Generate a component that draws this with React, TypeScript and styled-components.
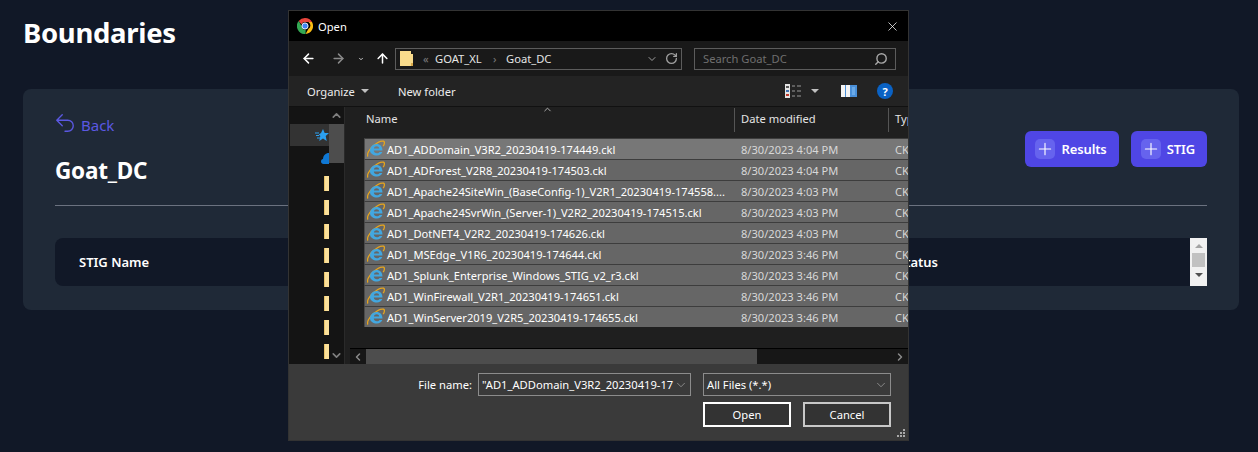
import React from "react";
import styled, { createGlobalStyle } from "styled-components";
import {
  ArrowLeft,
  ArrowRight,
  ArrowUp,
  ChevronDown,
  ChevronLeft,
  ChevronRight,
  ChevronUp,
  RotateCw,
  Search,
  X,
} from "lucide-react";
import { HiOutlineArrowUturnLeft, HiPlus } from "react-icons/hi2";

const GlobalStyle = createGlobalStyle`
  html, body {
    margin: 0;
    padding: 0;
    background: #111827;
    overflow: hidden;
  }
  * { box-sizing: border-box; }
`;

const Page = styled.div`
  position: relative;
  width: 1258px;
  height: 452px;
  padding: 15px 19px 0 23px;
  background: #111827;
  color: #ffffff;
  font-family: "Noto Sans", "Open Sans", sans-serif;
`;
const PageTitle = styled.h1`
  margin: 0 0 33px;
  height: 41px;
  font-size: 27.5px;
  line-height: 35px;
  font-weight: 700;
  letter-spacing: -0.3px;
`;
const Card = styled.section`
  height: 221px;
  padding: 24px 32px 0;
  background: #1f2937;
  border-radius: 8px;
`;
const CardHead = styled.div`
  display: flex;
  justify-content: space-between;
  align-items: flex-start;
  height: 93px;
  border-bottom: 1px solid #6b7280;
`;
const BackLink = styled.a`
  display: flex;
  align-items: center;
  gap: 5px;
  height: 24px;
  margin: 0 0 20px -1px;
  color: #5b58e2;
  font-size: 15px;
  svg { width: 22px; height: 22px; margin-top: -5px; }
`;
const CardTitle = styled.h2`
  margin: 0;
  font-size: 22.5px;
  line-height: 28px;
  font-weight: 700;
  letter-spacing: -0.2px;
`;
const Actions = styled.div`
  display: flex;
  gap: 12px;
  margin-top: 18px;
`;
const AddButton = styled.button`
  display: flex;
  align-items: center;
  gap: 6px;
  height: 36px;
  padding: 0 12px 0 10px;
  border: 0;
  border-radius: 6px;
  background: #4f46e5;
  color: #ffffff;
  font: 600 13px "Noto Sans", sans-serif;
  letter-spacing: -0.12px;
`;
const AddIcon = styled.span`
  display: flex;
  align-items: center;
  justify-content: center;
  width: 20px;
  height: 20px;
  border-radius: 5px;
  background: #6663ee;
  svg { width: 18px; height: 18px; }
`;
const TableHead = styled.div`
  display: flex;
  align-items: center;
  height: 48px;
  margin-top: 32px;
  padding-left: 24px;
  border-radius: 8px 0 0 8px;
  background: #111827;
  font-size: 13px;
  font-weight: 600;
`;
const HeadName = styled.span`
  width: 819px;
`;
const HeadStatus = styled.span`
  flex: 1;
`;
const WebScroll = styled.div`
  display: flex;
  flex-direction: column;
  align-items: center;
  width: 17px;
  height: 48px;
  background: #f1f1f1;
`;
const WebArrow = styled.span<{ $down?: boolean }>`
  width: 0;
  height: 0;
  margin: ${(p) => (p.$down ? "6px 0 0" : "6px 0 5px")};
  border-left: 4px solid transparent;
  border-right: 4px solid transparent;
  ${(p) =>
    p.$down ? "border-top: 4px solid #505050;" : "border-bottom: 4px solid #a3a3a3;"}
`;
const WebThumb = styled.span`
  width: 13px;
  height: 14px;
  background: #c1c1c1;
`;

/* file dialog, floats over the page */
const Dialog = styled.div`
  position: absolute;
  left: 288px;
  top: 10px;
  display: flex;
  flex-direction: column;
  width: 621px;
  height: 431px;
  border: 1px solid #333333;
  background: #1c1c1c;
  color: #ffffff;
  font: 11.2px "Noto Sans", sans-serif;
  overflow: hidden;
`;
const TitleBar = styled.div`
  display: flex;
  align-items: center;
  gap: 5px;
  height: 30px;
  padding: 0 8px;
  background: #000000;
`;
const TitleText = styled.span`
  flex: 1;
`;
const NavBar = styled.div`
  display: flex;
  align-items: center;
  height: 35px;
  padding: 0 12px 0 9px;
  background: #191919;
`;
const NavBtn = styled.span<{ $w: number; $dim?: boolean; $end?: boolean }>`
  display: flex;
  justify-content: ${(p) => (p.$end ? "flex-end" : "center")};
  width: ${(p) => p.$w}px;
  color: ${(p) => (p.$dim ? "#8a8a8a" : "#ffffff")};
`;
const AddressBox = styled.div`
  display: flex;
  align-items: center;
  width: 287px;
  height: 22px;
  margin-left: 5px;
  padding: 0 4px;
  border: 1px solid #5c5c5c;
  svg { flex: none; color: #a0a0a0; }
`;
const Crumb = styled.span<{ $w: number; $dim?: boolean; $pl?: number }>`
  flex: none;
  width: ${(p) => p.$w}px;
  padding-left: ${(p) => p.$pl || 0}px;
  color: ${(p) => (p.$dim ? "#7c7c7c" : "#e6e6e6")};
`;
const Refresh = styled(RotateCw)`
  margin-left: 7px;
`;
const SearchBox = styled.div`
  display: flex;
  align-items: center;
  justify-content: space-between;
  width: 202px;
  height: 22px;
  margin-left: 12px;
  padding: 0 7px 0 8px;
  border: 1px solid #5c5c5c;
  color: #6f6f6f;
  svg { transform: scaleX(-1); color: #a8a8a8; }
`;
const ToolBar = styled.div`
  display: flex;
  align-items: center;
  height: 31px;
  padding: 0 15px 0 18px;
  border-bottom: 1px solid #111111;
  background: #232323;
`;
const Caret = styled.span<{ $ml?: number }>`
  width: 0;
  height: 0;
  margin-left: ${(p) => p.$ml ?? 6}px;
  border-left: 4px solid transparent;
  border-right: 4px solid transparent;
  border-top: 4px solid #c0c0c0;
`;
const ToolLabel = styled.span<{ $w: number }>`
  display: flex;
  align-items: center;
  width: ${(p) => p.$w}px;
  color: #ececec;
`;
const ToolRight = styled.div`
  display: flex;
  align-items: center;
  margin-left: auto;
`;
const PaneWrap = styled.span`
  display: flex;
  margin-left: 22px;
`;
const HelpDot = styled.span`
  display: flex;
  align-items: center;
  justify-content: center;
  width: 16px;
  height: 16px;
  margin-left: 20px;
  border-radius: 50%;
  background: #0a62c4;
  font-size: 11px;
  font-weight: 700;
`;
const Body = styled.div`
  display: flex;
  height: 257px;
`;
const Side = styled.div`
  display: flex;
  width: 56px;
  border-right: 1px solid #2a2a2a;
  background: #141414;
`;
const SideList = styled.div`
  display: flex;
  flex-direction: column;
  width: 40px;
  padding: 17px 0 0 1px;
  overflow: hidden;
`;
const SideItem = styled.div<{ $on?: boolean; $h: number }>`
  display: flex;
  flex: none;
  align-items: center;
  justify-content: flex-end;
  height: ${(p) => p.$h}px;
  background: ${(p) => (p.$on ? "#333333" : "transparent")};
`;
const SideFolder = styled.span`
  width: 5px;
  height: 15px;
  background: #fbe09a;
  border-left: 1px solid #e9c46a;
`;
const SideBar = styled.div`
  display: flex;
  flex-direction: column;
  align-items: center;
  width: 15px;
  padding: 2px 0;
  color: #7f7f7f;
`;
const SideThumb = styled.div`
  flex: none;
  width: 15px;
  height: 39px;
  margin: 2px 0 auto;
  background: #4d4d4d;
`;
const Main = styled.div`
  position: relative;
  display: flex;
  flex: 1;
  flex-direction: column;
  min-width: 0;
  background: #1f1f1f;
`;
const SortMark = styled.span`
  position: absolute;
  left: 197px;
  top: -3px;
  color: #bbbbbb;
  svg { display: block; }
`;
const Columns = styled.div`
  display: flex;
  flex: none;
  height: 31px;
  padding-top: 1px;
  color: #e4e4e4;
`;
const ColHead = styled.span<{ $w: number; $pl?: number }>`
  flex: none;
  width: ${(p) => p.$w}px;
  height: 24px;
  padding: 3px 0 0 ${(p) => p.$pl ?? 6}px;
  border-right: 1px solid #555555;
`;
const ColLast = styled.span`
  padding: 3px 0 0 6px;
  white-space: nowrap;
`;
const Rows = styled.div`
  display: flex;
  flex: 1;
  flex-direction: column;
  padding-left: 19px;
  overflow: hidden;
`;
const Row = styled.div<{ $on?: boolean }>`
  display: flex;
  flex: none;
  align-items: center;
  height: 21px;
  border-top: 1px solid #3d3d3d;
  border-left: 1px solid #4a4a4a;
  background: ${(p) => (p.$on ? "#777777" : "#666666")};
  font-size: 11.1px;
  white-space: nowrap;
`;
const RowName = styled.span`
  display: flex;
  align-items: center;
  gap: 2px;
  flex: none;
  width: 376px;
  padding-left: 2px;
  color: #ffffff;
  svg { flex: none; }
`;
const RowDate = styled.span`
  flex: none;
  width: 154px;
  color: #d8d8d8;
`;
const RowType = styled.span`
  color: #d8d8d8;
`;
const HScroll = styled.div`
  display: flex;
  flex: none;
  align-items: center;
  height: 16px;
  margin-left: 5px;
  border-top: 1px solid #000000;
  background: #171717;
  color: #8a8a8a;
`;
const HBtn = styled.span`
  display: flex;
  justify-content: center;
  width: 16px;
`;
const HThumb = styled.span`
  align-self: stretch;
  width: 391px;
  background: #4d4d4d;
`;
const HGap = styled.span`
  flex: 1;
`;
const Footer = styled.div`
  position: relative;
  display: grid;
  flex: 1;
  grid-template-columns: 88px 88px;
  grid-template-rows: 23px 25px;
  gap: 6px 12px;
  align-content: start;
  justify-content: end;
  padding: 9px 17px 0 0;
  background: #3a3a3a;
`;
const NameField = styled.div`
  position: absolute;
  right: 217px;
  top: 9px;
  display: flex;
  align-items: center;
  gap: 6px;
`;
const Combo = styled.div<{ $w?: number }>`
  display: flex;
  align-items: center;
  justify-content: space-between;
  width: ${(p) => (p.$w ? `${p.$w}px` : "auto")};
  height: 23px;
  padding: 0 2px 0 3px;
  border: 1px solid #8c8c8c;
  white-space: nowrap;
  overflow: hidden;
  svg { flex: none; color: #a8a8a8; }
`;
const ComboSpan = styled(Combo)`
  grid-column: 1 / span 2;
`;
const DlgButton = styled.button<{ $primary?: boolean }>`
  height: 25px;
  padding: 0;
  border: 2px solid ${(p) => (p.$primary ? "#ffffff" : "#c8c8c8")};
  background: #333333;
  color: #ffffff;
  font: 11.2px "Noto Sans", sans-serif;
`;
const Grip = styled.svg`
  position: absolute;
  right: 2px;
  bottom: 2px;
`;

const files: [string, string][] = [
  ["AD1_ADDomain_V3R2_20230419-174449.ckl", "8/30/2023 4:04 PM"],
  ["AD1_ADForest_V2R8_20230419-174503.ckl", "8/30/2023 4:04 PM"],
  ["AD1_Apache24SiteWin_(BaseConfig-1)_V2R1_20230419-174558....", "8/30/2023 4:03 PM"],
  ["AD1_Apache24SvrWin_(Server-1)_V2R2_20230419-174515.ckl", "8/30/2023 4:03 PM"],
  ["AD1_DotNET4_V2R2_20230419-174626.ckl", "8/30/2023 4:03 PM"],
  ["AD1_MSEdge_V1R6_20230419-174644.ckl", "8/30/2023 3:46 PM"],
  ["AD1_Splunk_Enterprise_Windows_STIG_v2_r3.ckl", "8/30/2023 3:46 PM"],
  ["AD1_WinFirewall_V2R1_20230419-174651.ckl", "8/30/2023 3:46 PM"],
  ["AD1_WinServer2019_V2R5_20230419-174655.ckl", "8/30/2023 3:46 PM"],
];

const ChromeIcon = () => (
  <svg width="16" height="16" viewBox="0 0 16 16">
    <path d="M8 0a8 8 0 0 1 7 4H8a4 4 0 0 0-3.6 2.3L1.700 3A8 8 0 0 1 8 0z" fill="#e8453c" />
    <path d="M15 4a8 8 0 0 1-6.500 12l3-5.200A4 4 0 0 0 11.500 4z" fill="#f9bc15" />
    <path d="M8.500 16A8 8 0 0 1 1.700 3l3 5.200A4 4 0 0 0 8.700 12z" fill="#34a853" />
    <circle cx="8" cy="8" r="3.100" fill="#4285f4" stroke="#ffffff" strokeWidth="0.9" />
  </svg>
);

const IeIcon = () => (
  <svg width="18" height="18" viewBox="0 0 18 18">
    <path d="M1 16.500c-1.500-2 1-7 5-10.500S14 .5 16.500 1.200c1.500.7 1 3-.3 5" fill="none" stroke="#e6a51e" strokeWidth="1.300" />
    <path
      d="M3 10.500C3 6.900 5.900 4 9.500 4s6 2.700 6 6.500H6.800c.2 1.800 1.400 2.800 3.200 2.800 1.200 0 2-.5 2.600-1.300h2.700c-.9 2.300-2.800 3.500-5.300 3.500C6.200 15.500 3 13.400 3 10.500zM6.900 8.500h5.300C12 7 11 6.200 9.600 6.200S7.200 7 6.900 8.500z"
      fill="#42a7e0"
      fillRule="evenodd"
    />
  </svg>
);

const FolderIcon = () => (
  <svg width="14" height="17" viewBox="0 0 14 17">
    <path d="M0 1h11v3h2v12H0z" fill="#f9dc8c" />
    <path d="M11 13h2v3h-2z" fill="#d9a94a" />
  </svg>
);

const Cloud = () => (
  <svg width="8" height="11" viewBox="0 0 8 11">
    <path d="M8 0v11H2.500C1 11 0 9.800 0 8.500 0 7.200.8 6.200 2 6 2.200 2.500 4.500 0 8 0z" fill="#0f78d4" />
  </svg>
);

const Star = () => (
  <svg width="14" height="13" viewBox="0 0 14 13">
    <path d="M8 0l1.700 4H14l-3.300 3 1 5L8 9.500 4.300 12l1-5-1.500-1.500L6 4z" fill="#2ba0f0" />
    <path d="M0 4h4M1 6.500h3M2 9h3" stroke="#2ba0f0" />
  </svg>
);

const ViewIcon = () => (
  <svg width="17" height="14" viewBox="0 0 17 14">
    <path d="M0 0h5v14H0z" fill="#e4e4e4" />
    <path d="M1 2h3v2H1z" fill="#555" />
    <path d="M1 6h3v2H1z" fill="#3d6fb0" />
    <path d="M1 10h3v2H1z" fill="#c0392b" />
    <path d="M7 2h3M12 2h4M7 7h3M12 7h4M7 12h3M12 12h4" stroke="#9a9a9a" />
  </svg>
);

const PaneIcon = () => (
  <svg width="16" height="12" viewBox="0 0 16 12">
    <path d="M0 0h16v12H0z" fill="#4a90d9" />
    <path d="M0 0h4v12H0zM5 0h4v12H5z" fill="#f4f4f4" />
    <path d="M11 2h3v8h-3z" fill="#6aaae8" />
  </svg>
);

export default function App() {
  return (
    <Page>
      <GlobalStyle />
      <PageTitle>Boundaries</PageTitle>
      <Card>
        <CardHead>
          <div>
            <BackLink>
              <HiOutlineArrowUturnLeft />
              Back
            </BackLink>
            <CardTitle>Goat_DC</CardTitle>
          </div>
          <Actions>
            <AddButton>
              <AddIcon>
                <HiPlus />
              </AddIcon>
              Results
            </AddButton>
            <AddButton>
              <AddIcon>
                <HiPlus />
              </AddIcon>
              STIG
            </AddButton>
          </Actions>
        </CardHead>
        <TableHead>
          <HeadName>STIG Name</HeadName>
          <HeadStatus>Status</HeadStatus>
          <WebScroll>
            <WebArrow />
            <WebThumb />
            <WebArrow $down />
          </WebScroll>
        </TableHead>
      </Card>

      <Dialog>
        <TitleBar>
          <ChromeIcon />
          <TitleText>Open</TitleText>
          <X size={15} strokeWidth={1.2} />
        </TitleBar>
        <NavBar>
          <NavBtn $w={20}>
            <ArrowLeft size={15} strokeWidth={2.4} />
          </NavBtn>
          <NavBtn $w={40} $dim>
            <ArrowRight size={15} strokeWidth={2.4} />
          </NavBtn>
          <NavBtn $w={6}>
            <ChevronDown size={12} strokeWidth={3} />
          </NavBtn>
          <NavBtn $w={26} $end>
            <ArrowUp size={15} strokeWidth={2.4} />
          </NavBtn>
          <AddressBox>
            <FolderIcon />
            <Crumb $w={21} $dim $pl={9}>«</Crumb>
            <Crumb $w={58}>GOAT_XL</Crumb>
            <Crumb $w={13} $dim>›</Crumb>
            <Crumb $w={140}>Goat_DC</Crumb>
            <ChevronDown size={12} strokeWidth={2} />
            <Refresh size={13} strokeWidth={2.4} />
          </AddressBox>
          <SearchBox>
            Search Goat_DC
            <Search size={14} strokeWidth={2.4} />
          </SearchBox>
        </NavBar>
        <ToolBar>
          <ToolLabel $w={91}>
            Organize
            <Caret $ml={6} />
          </ToolLabel>
          <ToolLabel $w={80}>New folder</ToolLabel>
          <ToolRight>
            <ViewIcon />
            <Caret $ml={9} />
            <PaneWrap>
              <PaneIcon />
            </PaneWrap>
            <HelpDot>?</HelpDot>
          </ToolRight>
        </ToolBar>
        <Body>
          <Side>
            <SideList>
              <SideItem $on $h={22}>
                <Star />
              </SideItem>
              <SideItem $h={25}>
                <Cloud />
              </SideItem>
              {Array.from({ length: 8 }).map((_, i) => (
                <SideItem key={i} $h={24}>
                  <SideFolder />
                </SideItem>
              ))}
            </SideList>
            <SideBar>
              <ChevronUp size={13} strokeWidth={3} />
              <SideThumb />
              <ChevronDown size={13} strokeWidth={3} />
            </SideBar>
          </Side>
          <Main>
            <SortMark>
              <ChevronUp size={11} />
            </SortMark>
            <Columns>
              <ColHead $w={390} $pl={21}>Name</ColHead>
              <ColHead $w={154}>Date modified</ColHead>
              <ColLast>Type</ColLast>
            </Columns>
            <Rows>
              {files.map(([name, date], i) => (
                <Row key={name} $on={i === 0}>
                  <RowName>
                    <IeIcon />
                    {name}
                  </RowName>
                  <RowDate>{date}</RowDate>
                  <RowType>CKL File</RowType>
                </Row>
              ))}
            </Rows>
            <HScroll>
              <HBtn>
                <ChevronLeft size={12} strokeWidth={3} />
              </HBtn>
              <HThumb />
              <HGap />
              <HBtn>
                <ChevronRight size={12} strokeWidth={3} />
              </HBtn>
            </HScroll>
          </Main>
        </Body>
        <Footer>
          <NameField>
            File name:
            <Combo $w={213}>
              "AD1_ADDomain_V3R2_20230419-17
              <ChevronDown size={14} strokeWidth={1.2} />
            </Combo>
          </NameField>
          <ComboSpan>
            All Files (*.*)
            <ChevronDown size={14} strokeWidth={1.2} />
          </ComboSpan>
          <DlgButton $primary>Open</DlgButton>
          <DlgButton>Cancel</DlgButton>
          <Grip width="9" height="9" viewBox="0 0 9 9">
            <path d="M6 0h2v2H6zM3 3h2v2H3zM6 3h2v2H6zM0 6h2v2H0zM3 6h2v2H3zM6 6h2v2H6z" fill="#a8a8a8" />
          </Grip>
        </Footer>
      </Dialog>
    </Page>
  );
}
